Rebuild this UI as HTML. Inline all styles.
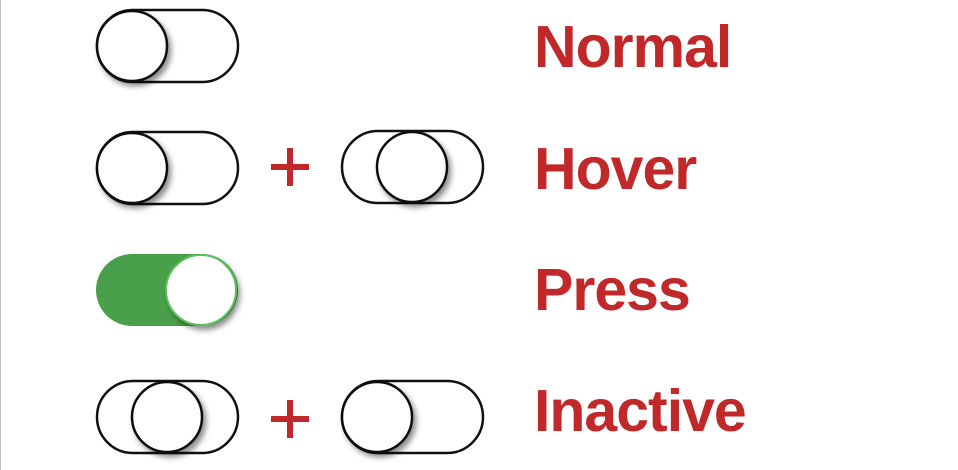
<!DOCTYPE html>
<html><head><style>
html,body{margin:0;padding:0;background:#fff;width:958px;height:470px;overflow:hidden}
svg{display:block}
text{font-family:"Liberation Sans",sans-serif;font-weight:bold;font-size:59px;fill:#c0282a;letter-spacing:-1px}
</style></head><body>
<svg width="958" height="470" viewBox="0 0 958 470">
<defs>
<filter id="sh" x="-30%" y="-30%" width="160%" height="170%"><feDropShadow dx="3" dy="4" stdDeviation="3" flood-color="#000" flood-opacity="0.45"/></filter>
</defs>
<line x1="0.5" y1="0" x2="0.5" y2="470" stroke="#bbb" stroke-width="1"/>
<g fill="#fff" stroke="#111" stroke-width="2.5">
<rect x="97" y="10" width="141" height="72" rx="36"/>
<circle cx="132" cy="46" r="35" filter="url(#sh)"/>
<rect x="97" y="132" width="141" height="72" rx="36"/>
<circle cx="132" cy="168" r="35" filter="url(#sh)"/>
<rect x="342" y="131" width="141" height="72" rx="36"/>
<circle cx="412" cy="167" r="35" filter="url(#sh)"/>
<rect x="97" y="381" width="141" height="72" rx="36"/>
<circle cx="167" cy="417" r="35" filter="url(#sh)"/>
<rect x="342" y="381" width="141" height="72" rx="36"/>
<circle cx="377" cy="417" r="35" filter="url(#sh)"/>
</g>
<rect x="96" y="254" width="142" height="72" rx="36" fill="#4aa04a"/>
<circle cx="201" cy="290" r="35" fill="#fff" stroke="#5cc05c" stroke-width="2" filter="url(#sh)"/>
<g fill="#c0282a">
<rect x="271" y="164" width="38" height="6"/><rect x="287" y="148" width="6" height="38"/>
<rect x="271" y="416" width="38" height="6"/><rect x="287" y="400" width="6" height="38"/>
</g>
<text x="534" y="67">Normal</text>
<text x="534" y="189">Hover</text>
<text x="534" y="310">Press</text>
<text x="534" y="431">Inactive</text>
</svg>
</body></html>
